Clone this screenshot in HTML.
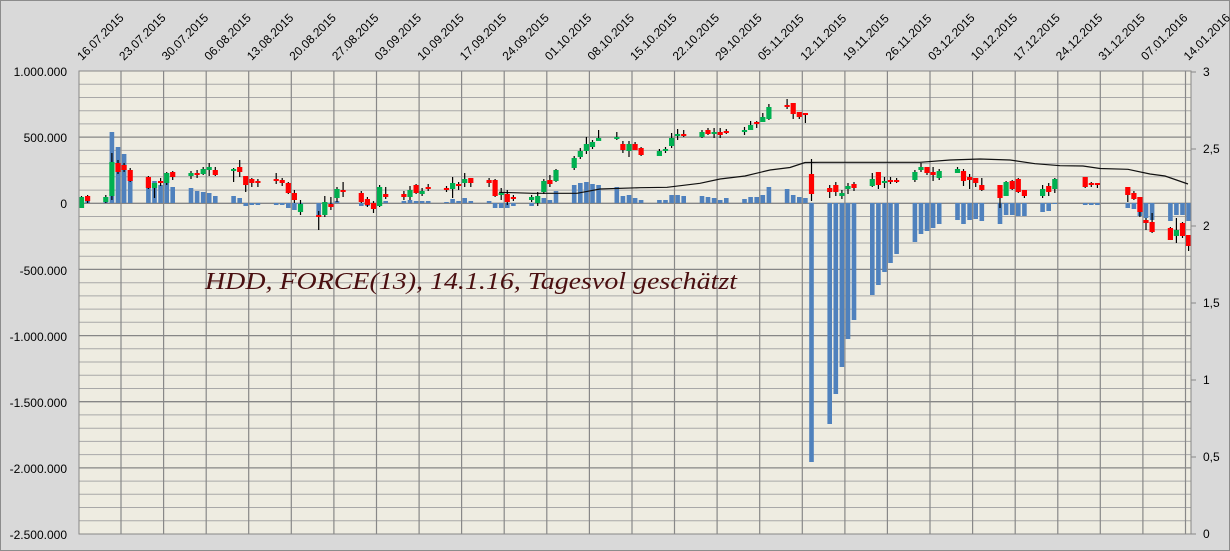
<!DOCTYPE html>
<html><head><meta charset="utf-8"><style>
html,body{margin:0;padding:0;background:#d9d9d9;}
svg{display:block;font-family:"Liberation Sans",sans-serif;}
</style></head><body>
<svg id="c" width="1230" height="551" xmlns="http://www.w3.org/2000/svg">
<rect x="0.5" y="0.5" width="1229" height="550" fill="#d9d9d9" stroke="#8c8c8c"/>
<rect x="79" y="71" width="1112" height="463" fill="#eeece1"/>
<g id="grid"></g>
<g id="vol" fill="#4f81bd"></g>
<polyline fill="none" stroke="#111" stroke-width="1.2" points="499,192.3 533,193.3 577,193.3 600,189 640,187.7 667,187.3 700,183.3 720,179 745,176 770,170 790,167.5 805,162.5 820,162.3 920,162.3 950,160 980,159 1010,160 1035,163.7 1060,165.7 1083,166 1100,168.5 1128,169.3 1150,174 1165,176 1188,184"/>
<g id="cdl"></g>
<rect x="79" y="71" width="1112" height="463" fill="none" stroke="#888"/>
<g id="lbl" font-size="12" fill="#000"></g>
<text x="205" y="289" font-family="'Liberation Serif',serif" font-style="italic" font-size="24" fill="#4a0f10" textLength="532" lengthAdjust="spacingAndGlyphs">HDD, FORCE(13), 14.1.16, Tagesvol geschätzt</text>
<g font-size="12" text-anchor="end">
<text x="67" y="76">1.000.000</text><text x="67" y="142">500.000</text><text x="67" y="208">0</text><text x="67" y="275">-500.000</text><text x="67" y="341">-1.000.000</text><text x="67" y="407">-1.500.000</text><text x="67" y="473">-2.000.000</text><text x="67" y="539">-2.500.000</text>
</g>
<g font-size="12">
<text x="1203" y="76">3</text><text x="1203" y="153">2,5</text><text x="1203" y="230">2</text><text x="1203" y="307">1,5</text><text x="1203" y="384">1</text><text x="1203" y="461">0,5</text><text x="1203" y="538">0</text>
</g>
</svg>
<script>
var NS="http://www.w3.org/2000/svg";
function el(p,t,a){var e=document.createElementNS(NS,t);for(var k in a)e.setAttribute(k,a[k]);p.appendChild(e);return e;}
var g=document.getElementById('grid');
for(var i=1;i<35;i++){var y=71+i*463/35;var maj=(i%5==0);el(g,'line',{x1:79,x2:1191,y1:y.toFixed(1),y2:y.toFixed(1),stroke:maj?'#868686':'#a8a8a8','stroke-width':maj?1.3:1});}
var dates=["16.07.2015","23.07.2015","30.07.2015","06.08.2015","13.08.2015","20.08.2015","27.08.2015","03.09.2015","10.09.2015","17.09.2015","24.09.2015","01.10.2015","08.10.2015","15.10.2015","22.10.2015","29.10.2015","05.11.2015","12.11.2015","19.11.2015","26.11.2015","03.12.2015","10.12.2015","17.12.2015","24.12.2015","31.12.2015","07.01.2016","14.01.2016"];
var L=document.getElementById('lbl');
for(var k=0;k<dates.length;k++){var x=(k==0)?79:121+(k-1)*42.58;
 if(k>0)el(g,'line',{x1:x.toFixed(1),x2:x.toFixed(1),y1:71,y2:534,stroke:'#888','stroke-width':1.2});
 var t=el(L,'text',{x:(x+3).toFixed(1),y:61,transform:'rotate(-45 '+(x+3).toFixed(1)+' 61)'});t.textContent=dates[k];}
for(var i=0;i<7;i++){var y=534-i*77;el(g,'line',{x1:1191,x2:1196,y1:y,y2:y,stroke:'#888'});}
// d, color, bodyTop, bodyBot, wickTop, wickBot, volEnd
var D=[
[0,'g',197,208,196,208,203],[1,'r',196,201,195,203,200],
[4,'g',197,202,195,203,201],[5,'g',162,196,153,200,132],[6,'r',163,172,160,174,147],[7,'r',165,170,163,172,154],[8,'r',170,181,168,182,181],
[11,'r',177,188,176,189,187],[12,'g',183,188,183,198,181],[13,'r',181,183,178,186,185],[14,'g',173,183,172,185,176],[15,'r',172,177,171,180,187],
[18,'g',173,176,171,179,188],[19,'r',173,175,170,178,191],[20,'g',169,174,167,175,192],[21,'g',167,170,163,176,193],[22,'r',170,175,167,176,196],
[25,'g',169,171,168,182,196],[26,'r',167,172,160,177,198],[27,'r',176,185,176,192,206],[28,'r',179,183,178,187,205],[29,'r',181,183,179,187,205],
[32,'r',179,181,173,184,205],[33,'r',180,183,178,186,205],[34,'r',183,193,182,194,208],[35,'r',193,200,190,203,210],[36,'g',204,212,200,215,206],
[39,'r',215,217,211,230,217],[40,'g',202,215,196,217,206],[41,'r',204,207,197,210,207],[42,'g',189,198,187,202,201],[43,'r',190,192,182,197,203],
[46,'r',193,202,191,203,206],[47,'r',199,205,197,207,206],[48,'r',203,209,201,213,204],[49,'g',187,206,185,207,202],[50,'r',194,197,187,199,201],
[53,'r',194,197,191,200,201],[54,'g',190,197,186,200,200],[55,'r',185,193,184,194,201],[56,'g',191,194,188,196,201],[57,'r',187,189,184,191,201],
[60,'r',188,190,186,192,202],[61,'g',183,189,177,198,199],[62,'r',184,186,182,190,201],[63,'g',179,183,173,187,198],[64,'r',178,183,178,187,201],
[67,'r',180,183,178,187,201],[68,'r',180,196,179,197,208],[69,'g',193,195,188,200,208],[70,'r',194,202,190,205,208],[71,'r',197,199,195,201,206],
[74,'g',197,200,195,202,206],[75,'g',196,203,192,206,202],[76,'g',181,192,179,194,198],[77,'r',180,184,175,187,200],[78,'g',170,181,169,182,191],
[81,'g',158,168,156,170,185],[82,'g',151,157,148,159,183],[83,'g',144,151,137,154,182],[84,'g',142,147,140,149,184],[85,'g',138,141,130,141,185],
[88,'g',137,139,132,140,187],[89,'r',144,150,141,153,196],[90,'g',144,151,141,157,195],[91,'r',144,150,142,150,198],[92,'r',148,155,147,156,200],
[95,'g',151,156,149,156,200],[96,'g',149,151,147,153,200],[97,'g',138,146,133,148,195],[98,'g',134,135,129,140,195],[99,'r',134,136,130,137,196],
[102,'g',132,137,130,138,196],[103,'r',130,134,128,135,197],[104,'g',132,133,128,138,198],[105,'r',132,135,128,138,200],[106,'r',131,133,129,134,198],
[109,'g',130,132,127,135,199],[110,'g',125,130,121,130,197],[111,'r',122,123,121,128,197],[112,'g',117,122,113,122,195],[113,'g',107,119,104,120,187],
[116,'r',105,107,99,109,189],[117,'r',103,114,103,119,195],[118,'r',112,117,112,119,197],[119,'r',113,115,113,123,198],[120,'r',174,194,159,201,462],
[123,'r',188,192,185,198,424],[124,'r',185,192,182,196,394],[125,'g',193,196,190,199,367],[126,'g',186,189,183,194,339],[127,'r',184,188,182,191,320],
[130,'g',179,186,173,187,295],[131,'r',172,185,172,189,285],[132,'g',181,183,177,188,272],[133,'r',180,182,177,184,263],[134,'r',180,182,178,183,254],
[137,'g',172,180,170,182,242],[138,'g',167,170,163,172,234],[139,'r',167,173,167,175,231],[140,'r',172,175,167,181,228],[141,'g',171,178,169,180,224],
[144,'g',169,173,167,173,220],[145,'r',171,181,169,186,224],[146,'r',177,180,174,189,220],[147,'r',178,183,178,187,219],[148,'r',185,190,178,191,221],
[151,'r',185,198,185,208,224],[152,'g',182,196,181,196,215],[153,'r',181,189,180,190,215],[154,'r',179,192,178,193,216],[155,'r',190,196,190,198,216],
[158,'g',189,196,185,198,212],[159,'r',186,192,183,196,211],[160,'g',179,189,178,193,204],
[165,'r',177,187,177,188,205],[166,'r',183,184,182,187,205],[167,'r',183,185,183,188,205],
[172,'r',187,195,187,202,208],[173,'r',193,199,191,200,209],[174,'r',197,212,197,217,216],[175,'r',220,223,218,230,218],[176,'r',222,232,213,233,220],
[179,'r',228,240,227,240,221],[180,'g',230,236,218,243,215],[181,'r',223,236,222,238,215],[182,'r',235,246,235,251,221]
];
var V=document.getElementById('vol'),C=document.getElementById('cdl');
D.forEach(function(r){var cx=81.5+r[0]*6.083;
 var vy=r[6];var y0=Math.min(203,vy),h=Math.abs(vy-203);
 if(h>0.5)el(V,'rect',{x:(cx-2.3).toFixed(1),y:y0,width:4.6,height:h});
});
D.forEach(function(r){var cx=81.5+r[0]*6.083;
 el(C,'line',{x1:cx.toFixed(1),x2:cx.toFixed(1),y1:r[4],y2:r[5],stroke:'#000','stroke-width':1.2});
 el(C,'rect',{x:(cx-2.6).toFixed(1),y:r[2],width:5.2,height:Math.max(2,r[3]-r[2]),fill:r[1]=='g'?'#00b050':'#ff0000'});
});
</script>
</body></html>
